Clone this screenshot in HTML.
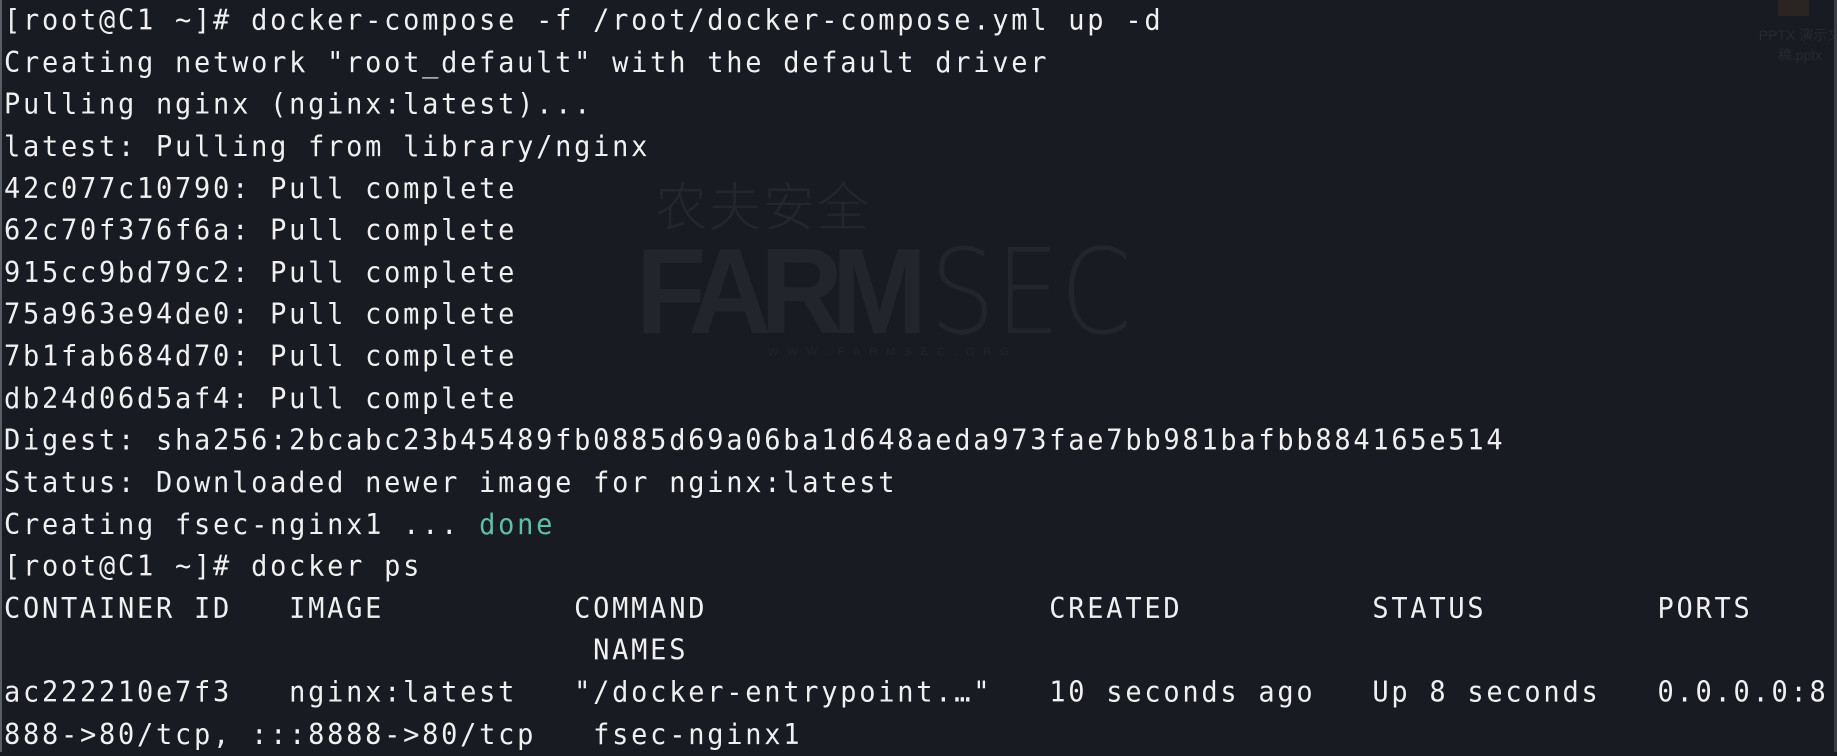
<!DOCTYPE html>
<html><head><meta charset="utf-8"><style>
html,body{margin:0;padding:0;}
body{width:1837px;height:752px;background:#181b22;overflow:hidden;position:relative;}
.l{position:absolute;left:0;top:0;width:2px;height:752px;background:#5a5d63;}
.r{position:absolute;right:0;top:0;width:3px;height:752px;background:#3a3d43;}
pre{position:absolute;left:4px;top:0px;margin:0;font-family:"DejaVu Sans Mono","Liberation Mono",monospace;font-size:27px;letter-spacing:2.75px;line-height:39.62px;color:#f0f0f0;white-space:pre;transform-origin:0 0;transform:scaleY(1.06);}
.g{color:#5ebfa9;}
svg{position:absolute;left:0;top:0;}
</style></head><body>
<svg width="1837" height="752">
<text x="655" y="226" font-family="Noto Sans CJK SC, sans-serif" font-size="52" font-weight="300" fill="#23262d" letter-spacing="2">农夫安全</text>
<text x="636" y="333" font-family="Liberation Sans, sans-serif" font-size="122" font-weight="bold" fill="#22252c" letter-spacing="-12" textLength="280" lengthAdjust="spacingAndGlyphs">FARM</text>
<text x="930" y="333" font-family="DejaVu Sans, sans-serif" font-size="118" font-weight="200" fill="#22252c" textLength="202" lengthAdjust="spacingAndGlyphs">SEC</text>
<text x="768" y="355" font-family="Liberation Sans, sans-serif" font-size="11" fill="#22252c" letter-spacing="9">WWW.FARMSEC.ORG</text>
<rect x="1778" y="0" width="31" height="16" fill="#2a2522"/>
<text x="1800" y="40" font-family="Liberation Sans, Noto Sans CJK SC, sans-serif" font-size="14" fill="#262930" text-anchor="middle">PPTX 演示文</text>
<text x="1800" y="60" font-family="Liberation Sans, Noto Sans CJK SC, sans-serif" font-size="14" fill="#262930" text-anchor="middle">稿.pptx</text>
</svg>
<div class="l"></div><div class="r"></div>
<pre>[root@C1 ~]# docker-compose -f /root/docker-compose.yml up -d
Creating network "root_default" with the default driver
Pulling nginx (nginx:latest)...
latest: Pulling from library/nginx
42c077c10790: Pull complete
62c70f376f6a: Pull complete
915cc9bd79c2: Pull complete
75a963e94de0: Pull complete
7b1fab684d70: Pull complete
db24d06d5af4: Pull complete
Digest: sha256:2bcabc23b45489fb0885d69a06ba1d648aeda973fae7bb981bafbb884165e514
Status: Downloaded newer image for nginx:latest
Creating fsec-nginx1 ... <span class="g">done</span>
[root@C1 ~]# docker ps
CONTAINER ID   IMAGE          COMMAND                  CREATED          STATUS         PORTS
                               NAMES
ac222210e7f3   nginx:latest   "/docker-entrypoint.…"   10 seconds ago   Up 8 seconds   0.0.0.0:8
888-&gt;80/tcp, :::8888-&gt;80/tcp   fsec-nginx1</pre>
</body></html>
